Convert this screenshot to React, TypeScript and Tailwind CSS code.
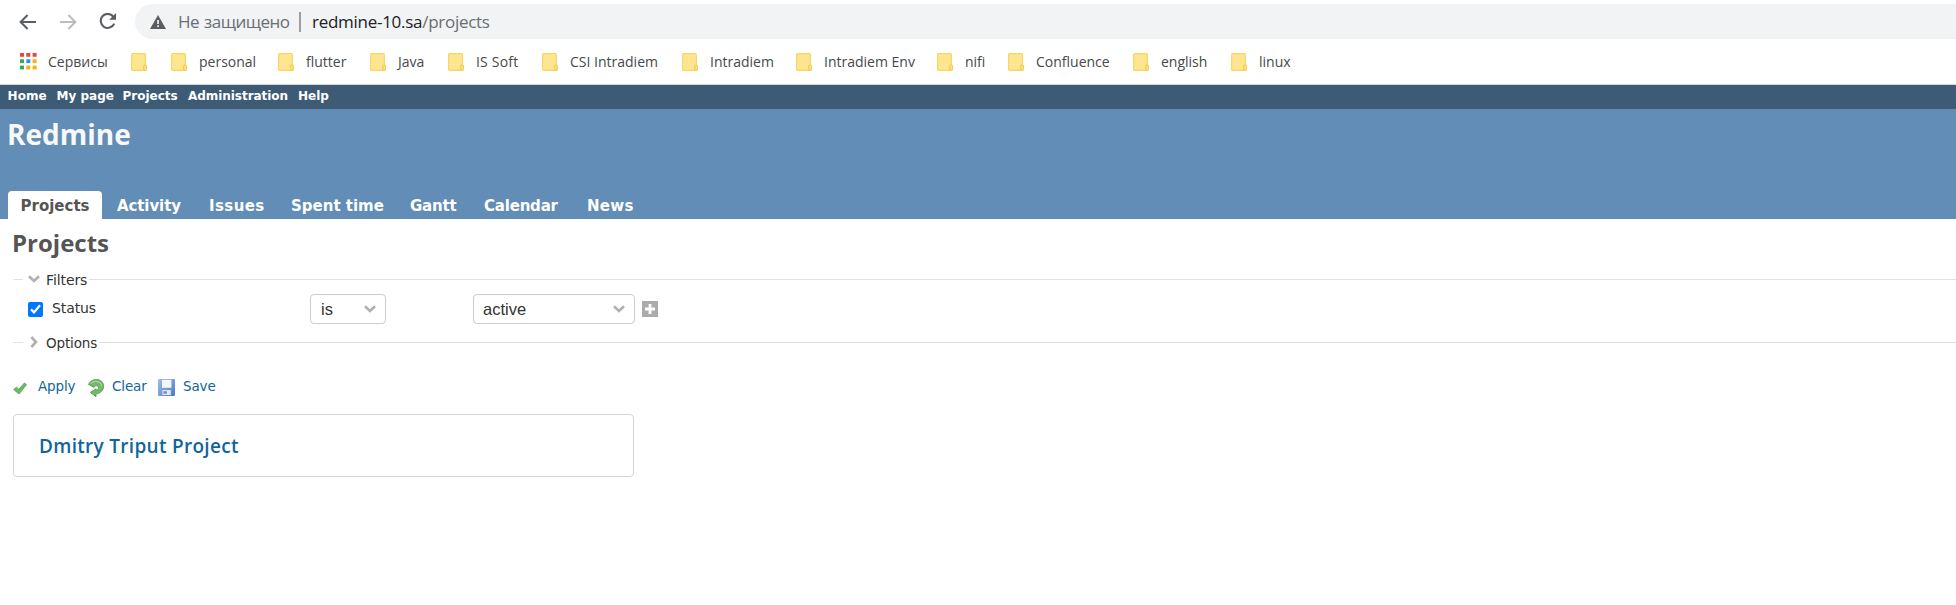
import type { ReactNode } from "react";

function Folder() {
  return (
    <svg width="16" height="18" viewBox="0 0 16 18" className="shrink-0">
      <rect x="0.6" y="0.6" width="13.8" height="16.8" rx="1" fill="#fee590" stroke="#f8d566" strokeWidth="1.2" />
      <rect x="12.6" y="12" width="3" height="5.4" rx="1" fill="#fbdf7c" stroke="#efc84c" strokeWidth="0.9" />
    </svg>
  );
}

function AppsGrid() {
  const colors = ["#f44336", "#f44336", "#f44336", "#34a853", "#2196f3", "#fbaf0a", "#34a853", "#fbaf0a", "#fbaf0a"];
  return (
    <svg width="17" height="17" viewBox="0 0 17 17" className="shrink-0">
      {colors.map((c, i) => (
        <rect key={i} x={(i % 3) * 6.3} y={Math.floor(i / 3) * 6.3} width="4" height="3.8" fill={c} />
      ))}
    </svg>
  );
}

function Bookmark({ width, text }: { width: string; text?: ReactNode }) {
  return (
    <div className={`flex shrink-0 items-center gap-3 ${width}`}>
      <Folder />
      {text}
    </div>
  );
}

function Chevron({ className }: { className?: string }) {
  return (
    <svg width="12" height="8" viewBox="0 0 12 8" className={className}>
      <path d="M1 1.3 6 6l5-4.7" fill="none" stroke="#b0b0b0" strokeWidth="2.6" />
    </svg>
  );
}

function Browser() {
  return (
    <header className="flex h-[85px] flex-col border-b border-[#d5d6d8] pt-1 font-['Open_Sans',sans-serif]">
      <div className="flex h-[35px] items-center pl-[19px]">
        <svg width="17" height="16" viewBox="0 0 17 16" className="mr-[24px] shrink-0">
          <path d="M17 8H1.6M8.6 1 1.6 8l7 7" fill="none" stroke="#5a5e63" strokeWidth="2" />
        </svg>
        <svg width="17" height="16" viewBox="0 0 17 16" className="mr-[22px] shrink-0">
          <path d="M0 8h15.4M8.4 1l7 7-7 7" fill="none" stroke="#babcbe" strokeWidth="2" />
        </svg>
        <svg width="18" height="17" viewBox="0 0 18 17" className="mr-[18px] shrink-0">
          <path d="M14.4 3.8A7 7 0 1 0 15.2 10.6" fill="none" stroke="#5a5e63" strokeWidth="2.1" />
          <path d="M17 0v6.8H10.2z" fill="#5a5e63" />
        </svg>
        <div className="flex h-[35px] flex-1 items-center rounded-l-full bg-[#f1f3f4] pl-[15px] text-[17px]">
          <svg width="16" height="14" viewBox="0 0 16 14" className="mr-[12px] shrink-0">
            <path d="M8 0l8 14H0z" fill="#5a5e63" />
            <path d="M7.2 5h1.7v4H7.2zM7.2 10.3h1.7V12H7.2z" fill="#f1f3f4" />
          </svg>
          <span className="w-[121px] whitespace-nowrap tracking-[-0.5px] text-[#6a6e73] [word-spacing:1px]">Не защищено</span>
          <span className="h-5 w-0.5 bg-[#9b9ea2]" />
          <span className="ml-[11px] whitespace-nowrap tracking-[-0.28px] text-[#6a6e73]">
            <span className="text-[#202124]">redmine-10.sa</span>/projects
          </span>
        </div>
      </div>
      <div className="flex h-[45px] items-center whitespace-nowrap pl-5 text-[14px] text-[#46494d]">
        <div className="flex w-[111px] shrink-0 items-center gap-[11px]">
          <AppsGrid />
          <span>Сервисы</span>
        </div>
        <Bookmark width="w-[40px]" />
        <Bookmark width="w-[107px]" text={<span>personal</span>} />
        <Bookmark width="w-[92px]" text={<span>flutter</span>} />
        <Bookmark width="w-[78px]" text={<span>Java</span>} />
        <Bookmark width="w-[94px]" text={<span className="tracking-[0.2px]">IS Soft</span>} />
        <Bookmark width="w-[140px]" text={<span>CSI Intradiem</span>} />
        <Bookmark width="w-[114px]" text={<span>Intradiem</span>} />
        <Bookmark width="w-[141px]" text={<span>Intradiem Env</span>} />
        <Bookmark width="w-[71px]" text={<span>nifi</span>} />
        <Bookmark width="w-[125px]" text={<span>Confluence</span>} />
        <Bookmark width="w-[98px]" text={<span>english</span>} />
        <Bookmark width="w-[80px]" text={<span>linux</span>} />
      </div>
    </header>
  );
}

function Legend({ open, children }: { open?: boolean; children: ReactNode }) {
  return (
    <div className="flex h-5 items-center">
      <span className="h-px w-[10px] shrink-0 bg-[#e2e2e2]" />
      <span className="flex w-[23px] shrink-0 pl-[5px]">
        <Chevron className={open ? "" : "-rotate-90"} />
      </span>
      {children}
      <span className="h-px flex-1 bg-[#e2e2e2]" />
    </div>
  );
}

function Filters() {
  return (
    <section className="text-[14px] text-[#333]">
      <Legend open>
        <span className="w-[43px] pt-0.5 tracking-[-0.1px]">Filters</span>
      </Legend>
      <div className="flex h-[43px] items-center pb-[3px] pl-[15px]">
        <span className="mr-[9px] flex size-[15px] items-center justify-center rounded-[2px] bg-[#0075ff]">
          <svg width="11" height="10" viewBox="0 0 11 10">
            <path d="M1 5.4l3 3L10 1.2" fill="none" stroke="#fff" strokeWidth="2.2" />
          </svg>
        </span>
        <span className="w-[258px] pb-0.5 tracking-[-0.1px]">Status</span>
        <span className="mr-[87px] flex h-[30px] w-[76px] items-center justify-between rounded border border-[#ccc] pr-[9px] pl-[10px] font-['Liberation_Sans',sans-serif] text-[16.5px]">
          is
          <Chevron className="-mt-px" />
        </span>
        <span className="mr-[7px] flex h-[30px] w-[162px] items-center justify-between rounded border border-[#ccc] pr-[9px] pl-[9px] font-['Liberation_Sans',sans-serif] text-[16.5px]">
          active
          <Chevron className="-mt-px" />
        </span>
        <svg width="16" height="16" viewBox="0 0 16 16">
          <rect width="16" height="16" fill="#ababab" />
          <path d="M8 3v10M3 8h10" stroke="#fff" strokeWidth="2.8" />
        </svg>
      </div>
      <Legend>
        <span className="w-[53px] pt-0.5 text-[13.5px] tracking-[-0.15px]">Options</span>
      </Legend>
    </section>
  );
}

function Actions() {
  return (
    <div className="mt-[22px] flex h-6 items-center text-[13.5px] tracking-[-0.15px] text-[#169]">
      <svg width="14" height="13" viewBox="0 0 14 13" className="mt-1 mr-[11px]">
        <path d="M0.6 7.4l3-2.2 2.2 2L11.4 1l2.2 1.6L6 12z" fill="#6cbb62" stroke="#4f9f49" strokeWidth="0.8" strokeLinejoin="round" />
      </svg>
      <span className="w-[50px]">Apply</span>
      <svg width="16" height="18" viewBox="0 0 16 18" className="mt-1 mr-2">
        <path
          d="M0.4 5.4C2.4 1.8 5.4 0.5 8.4 0.5c4.4 0 7.2 3 7.2 6.8 0 4-3 7-7.6 7.7V17.6L2.200 13.4 8 9.800v1.4c1.600-.3 2.600-1.300 2.600-2.600 0-1.200-1-1.900-2.300-1.900-1 0-1.900.5-2.200 1.700z"
          fill="#74b96c"
          stroke="#4b9448"
          strokeWidth="0.8"
          strokeLinejoin="round"
        />
        <path d="M2.6 4.6C6.5 0.8 13.6 2 13.6 7.4" fill="none" stroke="#a3d69b" strokeWidth="1.2" />
      </svg>
      <span className="w-[46px]">Clear</span>
      <svg width="17" height="17" viewBox="0 0 17 17" className="mt-0.5 mr-2">
        <defs>
          <linearGradient id="disk" x1="0" y1="0" x2="1" y2="1">
            <stop offset="0" stopColor="#9dbdec" />
            <stop offset="1" stopColor="#4d7cc2" />
          </linearGradient>
        </defs>
        <rect width="17" height="17" rx="1" fill="url(#disk)" />
        <rect x="4" y="0.8" width="9.4" height="8" fill="#f1f6fd" />
        <rect x="4.4" y="11" width="8.4" height="5" fill="#e4e8ec" />
        <rect x="5.4" y="12.2" width="3.4" height="2.6" fill="#6d8fc4" />
      </svg>
      <span>Save</span>
    </div>
  );
}

export default function App() {
  return (
    <div className="h-[605px] overflow-hidden bg-white font-['DejaVu_Sans',sans-serif]">
      <Browser />
      <nav className="flex h-6 items-center bg-[#3e5b76] pb-0.5 pl-[7.5px] text-[12px] font-bold whitespace-nowrap text-white">
        <a className="w-[49px] tracking-[0.1px]">Home</a>
        <a className="w-[66px]">My page</a>
        <a className="w-[65.5px]">Projects</a>
        <a className="w-[110px] tracking-[-0.05px]">Administration</a>
        <a>Help</a>
      </nav>
      <div className="flex h-[110px] flex-col justify-between bg-[#628db6] pl-2">
        <h1 className="-ml-px pt-[6px] font-['Open_Sans',sans-serif] text-[28px] leading-[38px] font-bold text-[#f8f8f8]">Redmine</h1>
        <div className="flex h-7 items-center text-[15px] font-bold whitespace-nowrap text-white">
          <a className="mr-[15px] flex h-7 w-[94px] items-center justify-center rounded-t bg-white pt-0.5 text-[#555]">Projects</a>
          <a className="w-[92px] pt-0.5 tracking-[-0.1px]">Activity</a>
          <a className="w-[82px] pt-0.5 tracking-[0.4px]">Issues</a>
          <a className="w-[119px] pt-0.5">Spent time</a>
          <a className="w-[74px] pt-0.5 tracking-[-0.2px]">Gantt</a>
          <a className="w-[103px] pt-0.5 tracking-[-0.2px]">Calendar</a>
          <a className="pt-0.5 tracking-[0.3px]">News</a>
        </div>
      </div>
      <main className="pl-[13px]">
        <h2 className="-ml-px flex h-[50px] items-center pb-0.5 font-['Open_Sans',sans-serif] text-[24px] font-bold text-[#555]">Projects</h2>
        <Filters />
        <Actions />
        <div className="mt-4 flex h-[63px] w-[621px] items-center rounded border border-[#d5d5d5] pt-0.5 pl-[25px]">
          <a className="font-['Open_Sans',sans-serif] text-[19px] font-semibold tracking-[0.3px] text-[#169]">Dmitry Triput Project</a>
        </div>
      </main>
    </div>
  );
}
